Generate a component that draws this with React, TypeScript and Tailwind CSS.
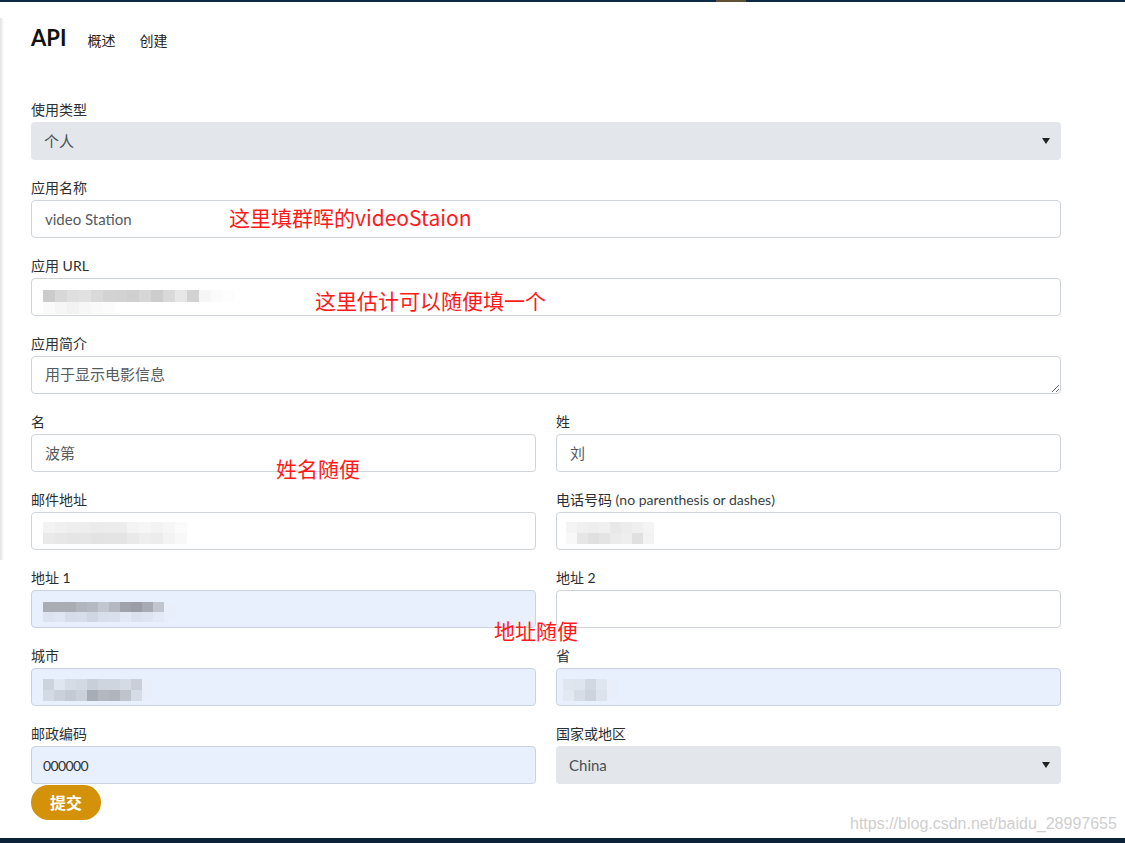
import React from 'react';

const FONT = { fontFamily: 'Lato, "Noto Sans CJK SC", sans-serif' };

type BlurProps = { rows: string[][]; cw: number; ch: number };

// pixelated privacy blur inside a field
const Blur: React.FC<BlurProps> = ({ rows, cw, ch }) => (
  <div className="flex flex-col">
    {rows.map((row, i) => (
      <div key={i} className="flex">
        {row.map((c, j) => (
          <div key={j} style={{ width: cw, height: ch, background: c }} />
        ))}
      </div>
    ))}
  </div>
);

const Label: React.FC<{ children: React.ReactNode }> = ({ children }) => (
  <div className="h-5 text-[14px] leading-5 text-[#2b2f33] mb-[2px]">{children}</div>
);

const Field: React.FC<{ children?: React.ReactNode; fill?: boolean }> = ({ children, fill }) => (
  <div
    className={`h-[38px] rounded-[4px] border flex items-center px-[13px] text-[15px] text-[#555b61] ${
      fill ? 'bg-[#e8f0fe] border-[#c9d2de]' : 'bg-white border-[#ced4da]'
    }`}
  >
    {children}
  </div>
);

const Select: React.FC<{ value: string }> = ({ value }) => (
  <div className="h-[38px] rounded-[4px] bg-[#e3e6ea] flex items-center justify-between pl-[13px] pr-[11px] text-[15px] text-[#495057]">
    <span>{value}</span>
    <svg width="8" height="6" viewBox="0 0 8 6">
      <path d="M0 0 L8 0 L4 6 Z" fill="#222" />
    </svg>
  </div>
);

const Note: React.FC<{ children: React.ReactNode; className: string }> = ({ children, className }) => (
  <div
    className={`absolute text-[21px] leading-[26px] text-[#ff1a1a] whitespace-nowrap ${className}`}
    style={{ fontFamily: '"Noto Sans CJK SC", Lato, sans-serif' }}
  >
    {children}
  </div>
);

const g1 = ['#cbcbcb', '#d8d8d8', '#dfdfdf', '#e1e1e1', '#d9d9d9', '#d3d3d3', '#d2d2d2', '#cfcfcf', '#d6d6d6', '#cdcdcd', '#d9d9d9', '#e7e7e7', '#d2d2d2', '#f6f6f6', '#fbfbfb', '#fdfdfd', '#ffffff'];
const g2 = ['#fafafa', '#f6f6f6', '#f2f2f2', '#f7f7f7', '#fafafa', '#fcfcfc', '#ffffff', '#ffffff', '#ffffff', '#ffffff', '#ffffff', '#ffffff', '#ffffff', '#ffffff', '#ffffff', '#ffffff', '#ffffff'];

const App: React.FC = () => {
  return (
    <div className="relative w-[1125px] h-[843px] bg-white flex flex-col overflow-hidden" style={FONT}>
      {/* top bar */}
      <div className="h-[2px] bg-[#0c2a44] flex">
        <div className="w-[716px]" />
        <div className="w-[30px] bg-[#5e5232]" />
      </div>

      {/* left edge shadow */}
      <div className="absolute left-0 top-[18px] h-[542px] w-[4px] bg-gradient-to-r from-[#e2e2e2] to-transparent" />

      <div className="flex-1 pl-[31px] w-[1061px] relative">
        {/* header */}
        <div className="flex items-end h-[47px]">
          <span className="text-[22px] font-bold leading-none text-[#111] mr-[21px]">API</span>
          <span className="text-[14px] leading-none text-[#222] mr-[24px] mb-[1px]">概述</span>
          <span className="text-[14px] leading-none text-[#222] mb-[1px]">创建</span>
        </div>

        <div className="mt-[51px] flex flex-col gap-[18px]">
          <div>
            <Label>使用类型</Label>
            <Select value="个人" />
          </div>
          <div>
            <Label>应用名称</Label>
            <Field>video Station</Field>
          </div>
          <div>
            <Label>应用 URL</Label>
            <Field>
              <div className="-ml-[2px] mt-[10px]">
                <Blur rows={[g1, g2]} cw={12} ch={12} />
              </div>
            </Field>
          </div>
          <div>
            <Label>应用简介</Label>
            <textarea
              readOnly
              value="用于显示电影信息"
              className="block w-full h-[38px] rounded-[4px] border border-[#ced4da] px-[13px] py-[7px] text-[15px] leading-5 text-[#555b61] outline-none"
              style={FONT}
            />
          </div>

          <div className="grid grid-cols-2 gap-x-[20px] gap-y-[18px]">
            <div>
              <Label>名</Label>
              <Field>波第</Field>
            </div>
            <div>
              <Label>姓</Label>
              <Field>刘</Field>
            </div>
            <div>
              <Label>邮件地址</Label>
              <Field>
                <div className="-ml-[2px] mt-[4px]">
                  <Blur
                    rows={[
                      ['#f3f3f3', '#f0f0f0', '#eeeeee', '#ededed', '#ebebeb', '#ececec', '#ececec', '#f4f4f4', '#f6f6f6', '#f3f3f3', '#f6f6f6', '#fbfbfb', '#ffffff'],
                      ['#e9e9e9', '#e7e7e7', '#e5e5e5', '#e6e6e6', '#e3e3e3', '#e4e4e4', '#e4e4e4', '#e9e9e9', '#eeeeee', '#ececec', '#f3f3f3', '#f8f8f8', '#ffffff'],
                    ]}
                    cw={12}
                    ch={11}
                  />
                </div>
              </Field>
            </div>
            <div>
              <Label>
                电话号码 <span className="text-[#3a3f44]">(no parenthesis or dashes)</span>
              </Label>
              <Field>
                <div className="-ml-[4px] mt-[4px]">
                  <Blur
                    rows={[
                      ['#f4f4f4', '#f0f0f0', '#eeeeee', '#f0f0f0', '#e8e8e8', '#ececec', '#efefef', '#f4f4f4', '#ffffff'],
                      ['#f8f8f8', '#e6e6e6', '#e0e0e0', '#e4e4e4', '#ebebeb', '#eeeeee', '#e0e0e0', '#f2f2f2', '#ffffff'],
                    ]}
                    cw={11}
                    ch={11}
                  />
                </div>
              </Field>
            </div>
            <div>
              <Label>地址 1</Label>
              <Field fill>
                <div className="-ml-[2px] mt-[6px]">
                  <Blur
                    rows={[
                      ['#a9acb3', '#a9adb4', '#a9acb3', '#b1b5bd', '#b5b9c1', '#c2c6ce', '#b4b8c0', '#9fa2aa', '#9a9da5', '#a7aab2', '#c1c5cd', '#e8effa'],
                      ['#dce3ee', '#dfe6f1', '#d6dde8', '#d7dee9', '#d0d7e2', '#d8dfea', '#d9e0eb', '#e2e9f4', '#dbe2ed', '#dee5f0', '#e3eaf5', '#e8effa'],
                    ]}
                    cw={11}
                    ch={10}
                  />
                </div>
              </Field>
            </div>
            <div>
              <Label>地址 2</Label>
              <Field />
            </div>
            <div>
              <Label>城市</Label>
              <Field fill>
                <div className="-ml-[2px] mt-[6px]">
                  <Blur
                    rows={[
                      ['#cdd3dd', '#e0e6f0', '#d6dce6', '#d3d9e3', '#c9cfd9', '#cfd5df', '#cfd5df', '#d5dbe5', '#c9ced8', '#e8effa'],
                      ['#d4dae4', '#cbd1db', '#c4cad4', '#cbd1db', '#a8acb4', '#b3b7bf', '#b0b4bc', '#bec3cc', '#d6dce6', '#e8effa'],
                    ]}
                    cw={11}
                    ch={11}
                  />
                </div>
              </Field>
            </div>
            <div>
              <Label>省</Label>
              <Field fill>
                <div className="-ml-[7px] mt-[6px]">
                  <Blur
                    rows={[
                      ['#e0e6f0', '#dfe5ef', '#d2d8e2', '#e0e6f0', '#e8effa'],
                      ['#e3e9f3', '#d7dde7', '#cdd3dd', '#dde3ed', '#e8effa'],
                    ]}
                    cw={11}
                    ch={11}
                  />
                </div>
              </Field>
            </div>
            <div>
              <Label>邮政编码</Label>
              <Field fill>
                <span className="text-[#333] text-[14px] tracking-[-0.6px] -ml-[2px]">000000</span>
              </Field>
            </div>
            <div>
              <Label>国家或地区</Label>
              <Select value="China" />
            </div>
          </div>
        </div>

        <button className="mt-[1px] w-[70px] h-[35px] rounded-full bg-[#d4910a] text-white font-bold text-[16px] leading-none">
          提交
        </button>

        {/* annotations */}
        <Note className="left-[229px] top-[202px]">这里填群晖的videoStaion</Note>
        <Note className="left-[315px] top-[285px]">这里估计可以随便填一个</Note>
        <Note className="left-[276px] top-[453px]">姓名随便</Note>
        <Note className="left-[494px] top-[615px]">地址随便</Note>
      </div>

      <div
        className="absolute left-[850px] top-[814px] text-[16px] leading-5 text-[#cfcfcf] whitespace-nowrap"
        style={{ fontFamily: '"Liberation Sans", Arial, sans-serif' }}
      >
        https://blog.csdn.net/baidu_28997655
      </div>

      {/* bottom bar */}
      <div className="h-[5px] bg-[#0b2239]" />
    </div>
  );
};

export default App;
